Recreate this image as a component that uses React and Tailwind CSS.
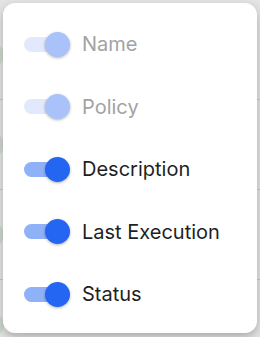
import React from 'react';

const columns = [
    { label: 'Name', checked: true, disabled: true },
    { label: 'Policy', checked: true, disabled: true },
    { label: 'Description', checked: true, disabled: false },
    { label: 'Last Execution', checked: true, disabled: false },
    { label: 'Status', checked: true, disabled: false },
];

const Toggle = ({ disabled }) => (
    <div className="relative w-[46px] h-[25px] shrink-0">
        <div className={`absolute left-0 top-[5px] w-[36px] h-[15px] rounded-full ${disabled ? 'bg-[#e2e9fc]' : 'bg-[#8fb1f8]'}`} />
        <div className={`absolute right-0 top-0 w-[25px] h-[25px] rounded-full shadow-[0_1px_3px_rgba(0,0,0,0.3)] ${disabled ? 'bg-[#a9c2fa]' : 'bg-[#2466f2]'}`} />
    </div>
);

const App = () => {
    return (
        <div className="relative w-[260px] h-[337px] overflow-hidden bg-[#e4e4e4]" style={{ fontFamily: 'Inter, "Noto Sans", sans-serif' }}>
            {/* table rows behind the menu */}
            <div className="pt-[10px]">
                {[0, 1, 2, 3].map(i => (
                    <div key={i} className="h-[90px] border-b border-[#c9c9c9] flex items-center">
                        <div className="-ml-[20px] w-[24px] h-[24px] rounded-full bg-[#cfd9cf]" />
                    </div>
                ))}
            </div>

            {/* column visibility menu */}
            <div className="absolute left-[3px] top-[3px] w-[254px] h-[330px] bg-white rounded-xl shadow-[0_4px_10px_rgba(0,0,0,0.25)] pt-[10px]">
                {columns.map(col => (
                    <div key={col.label} className="h-[62.5px] flex items-center pl-[21px] gap-3">
                        <Toggle disabled={col.disabled} />
                        <span className={`text-[20px] leading-none ${col.disabled ? 'text-[#a3a3a3]' : 'text-[#1f1f1f]'}`}>
                            {col.label}
                        </span>
                    </div>
                ))}
            </div>
        </div>
    );
};

export default App;
